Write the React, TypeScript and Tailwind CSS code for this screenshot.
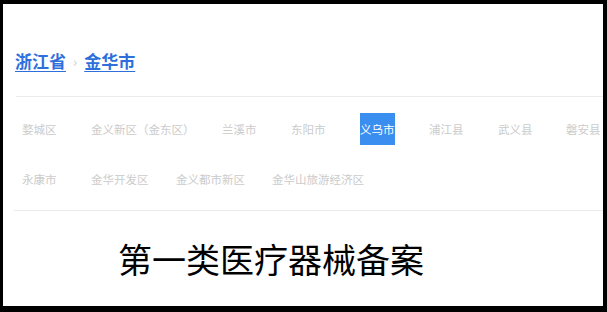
import React from 'react';

const rowOne = [
  { name: '婺城区', w: 'w-[69px]' },
  { name: '金义新区（金东区）', w: 'w-[131px]' },
  { name: '兰溪市', w: 'w-[69px]' },
  { name: '东阳市', w: 'w-[69px]' },
  { name: '义乌市', w: 'w-[69px]', active: true },
  { name: '浦江县', w: 'w-[69px]' },
  { name: '武义县', w: 'w-[68px]' },
  { name: '磐安县', w: 'w-[69px]' },
];

const rowTwo = [
  { name: '永康市', w: 'w-[69px]' },
  { name: '金华开发区', w: 'w-[85px]' },
  { name: '金义都市新区', w: 'w-[96px]' },
  { name: '金华山旅游经济区', w: 'w-[120px]' },
];

type Area = { name: string; w: string; active?: boolean };

const AreaRow: React.FC<{ items: Area[] }> = ({ items }) => (
  <div className="flex h-[32px] items-center whitespace-nowrap pl-[19px]">
    {items.map((a) => (
      <div key={a.name} className={`${a.w} shrink-0`}>
        {a.active ? (
          <span className="inline-flex h-[32px] items-center bg-[#3a8ef0] text-white">{a.name}</span>
        ) : (
          <span className="text-[#cbcbcb]">{a.name}</span>
        )}
      </div>
    ))}
  </div>
);

const App: React.FC = () => {
  return (
    <div className="h-[312px] w-[607px] bg-black pb-[6px] pl-[3px] pr-[4px] pt-[4px]">
      <div
        className="h-full w-full overflow-hidden bg-white"
        style={{ fontFamily: '"Noto Sans CJK SC", "Noto Sans", sans-serif' }}
      >
        {/* breadcrumb */}
        <div className="flex h-[92px] items-start pl-[12px] pt-[45px]">
          <div className="flex items-center text-[17px] font-bold leading-[24px] text-[#2f6fdc]">
            <a href="#" className="underline underline-offset-[3px]">浙江省</a>
            <span className="mx-[7px] text-[14px] font-normal text-[#cccccc]">›</span>
            <a href="#" className="underline underline-offset-[3px]">金华市</a>
          </div>
        </div>
        <div className="ml-[13px] border-t border-[#ececec]" />

        {/* areas */}
        <div className="text-[11.5px] leading-[32px]">
          <div className="mt-[16px]">
            <AreaRow items={rowOne} />
          </div>
          <div className="mt-[18px]">
            <AreaRow items={rowTwo} />
          </div>
        </div>
        <div className="ml-[11px] mt-[15px] border-t border-[#ececec]" />

        {/* title */}
        <h1 className="mt-[28px] pl-[115px] text-[34px] font-normal leading-[40px] text-black">
          第一类医疗器械备案
        </h1>
      </div>
    </div>
  );
};

export default App;
